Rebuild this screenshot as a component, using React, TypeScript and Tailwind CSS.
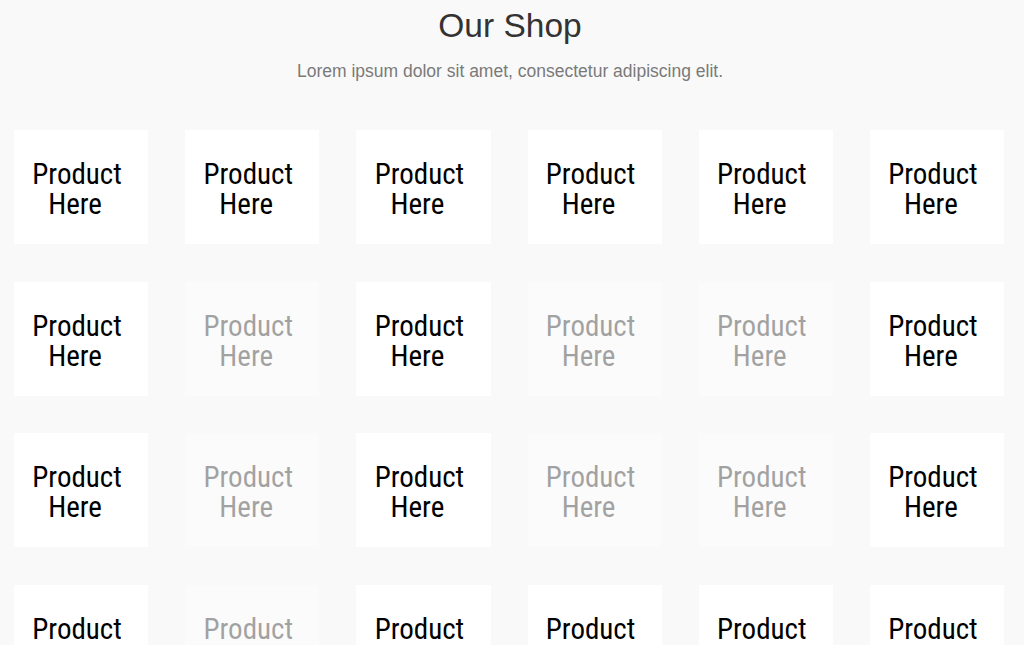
const faded = new Set([7, 9, 10, 13, 15, 16, 19]);

function ProductCard({ dim }: { dim: boolean }) {
  return (
    <div
      className={[
        'flex h-[114px] flex-col items-center justify-center bg-white pt-[4px] pr-2',
        dim ? 'opacity-35' : '',
      ].join(' ')}
    >
      <span className="block font-['Roboto_Condensed','DejaVu_Sans_Condensed','Liberation_Sans_Narrow',sans-serif] text-[29px] leading-[30px] font-normal text-black">
        Product
      </span>
      <span className="block pr-[4px] font-['Roboto_Condensed','DejaVu_Sans_Condensed','Liberation_Sans_Narrow',sans-serif] text-[29px] leading-[30px] font-normal text-black">
        Here
      </span>
    </div>
  );
}

export default function App() {
  return (
    <div className="h-[645px] overflow-hidden bg-[#f9f9f9] font-['Liberation_Sans',Arial,sans-serif]">
      <header className="flex flex-col items-center pt-[6px] pr-[4px]">
        <h1 className="text-[33.5px] leading-[40px] text-[#333333]">Our Shop</h1>
        <p className="mt-[14px] text-[17.5px] leading-[22px] text-[#7a7a7a]">
          Lorem ipsum dolor sit amet, consectetur adipiscing elit.
        </p>
      </header>
      <main className="mt-[48px] grid grid-cols-6 gap-x-[37px] gap-y-[37.5px] pr-[20px] pl-[14px]">
        {Array.from({ length: 24 }, (_, i) => (
          <ProductCard key={i} dim={faded.has(i)} />
        ))}
      </main>
    </div>
  );
}
